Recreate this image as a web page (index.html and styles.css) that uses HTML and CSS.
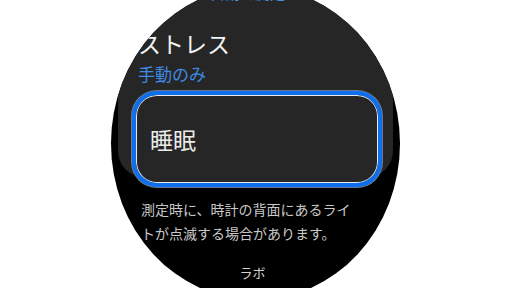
FILE: index.html
```html
<!DOCTYPE html>
<html lang="ja">
<head>
<meta charset="utf-8">
<link rel="stylesheet" href="styles.css">
</head>
<body>
<div class="watch">
  <div class="card">
    <div class="prev">自動で測定</div>
    <div class="divider"></div>
    <div class="item">
      <div class="title">ストレス</div>
      <div class="sub">手動のみ</div>
    </div>
    <div class="focus"><span>睡眠</span></div>
  </div>
  <p class="desc">測定時に、時計の背面にあるライ<br>トが点滅する場合があります。</p>
  <div class="lab">ラボ</div>
</div>
</body>
</html>
```
FILE: styles.css
```css
html, body {
  margin: 0;
  padding: 0;
  background: #ffffff;
}
body {
  display: flex;
  justify-content: center;
  height: 288px;
  overflow: hidden;
  font-family: "Noto Sans CJK JP", "Noto Sans", sans-serif;
}
.watch {
  width: 289px;
  height: 313px;
  margin-top: -13px;
  border-radius: 50%;
  background: #000;
  overflow: hidden;
  display: flex;
  flex-direction: column;
  flex-shrink: 0;
}
.card {
  margin: 0 7px;
  height: 190px;
  background: #262626;
  border-radius: 0 0 26px 26px;
  display: flex;
  flex-direction: column;
}
.prev {
  margin-top: -4px;
  padding-left: 92px;
  font-size: 15px;
  line-height: 20px;
  color: #4a8fdc;
}
.divider {
  margin: 11px 14px 0;
  height: 1px;
  background: #4a4a4a;
}
.item {
  padding-left: 20px;
  margin-top: 16px;
}
.title {
  font-size: 23px;
  line-height: 27px;
  color: #f2f2f2;
}
.sub {
  margin-top: 6px;
  font-size: 17px;
  line-height: 22px;
  color: #3d8ae2;
}
.focus {
  margin: 6px 0 0 14px;
  width: 250px;
  height: 96px;
  box-sizing: border-box;
  flex-shrink: 0;
  border: 4px solid #0d6fec;
  border-radius: 25px;
  box-shadow: inset 0 0 0 1px #e8e8e8, 0 0 0 1px #6a7890;
  background: #262626;
  display: flex;
  align-items: center;
  padding-left: 14px;
}
.focus span {
  font-size: 23px;
  line-height: 28px;
  color: #ececec;
}
.desc {
  margin: 20px 0 0;
  padding-left: 30px;
  font-size: 14px;
  line-height: 24px;
  color: #c8c8c8;
  white-space: nowrap;
}
.lab {
  margin-top: 19px;
  text-align: center;
  font-size: 13px;
  line-height: 18px;
  color: #d4d4d4;
  padding-right: 6px;
}
```
